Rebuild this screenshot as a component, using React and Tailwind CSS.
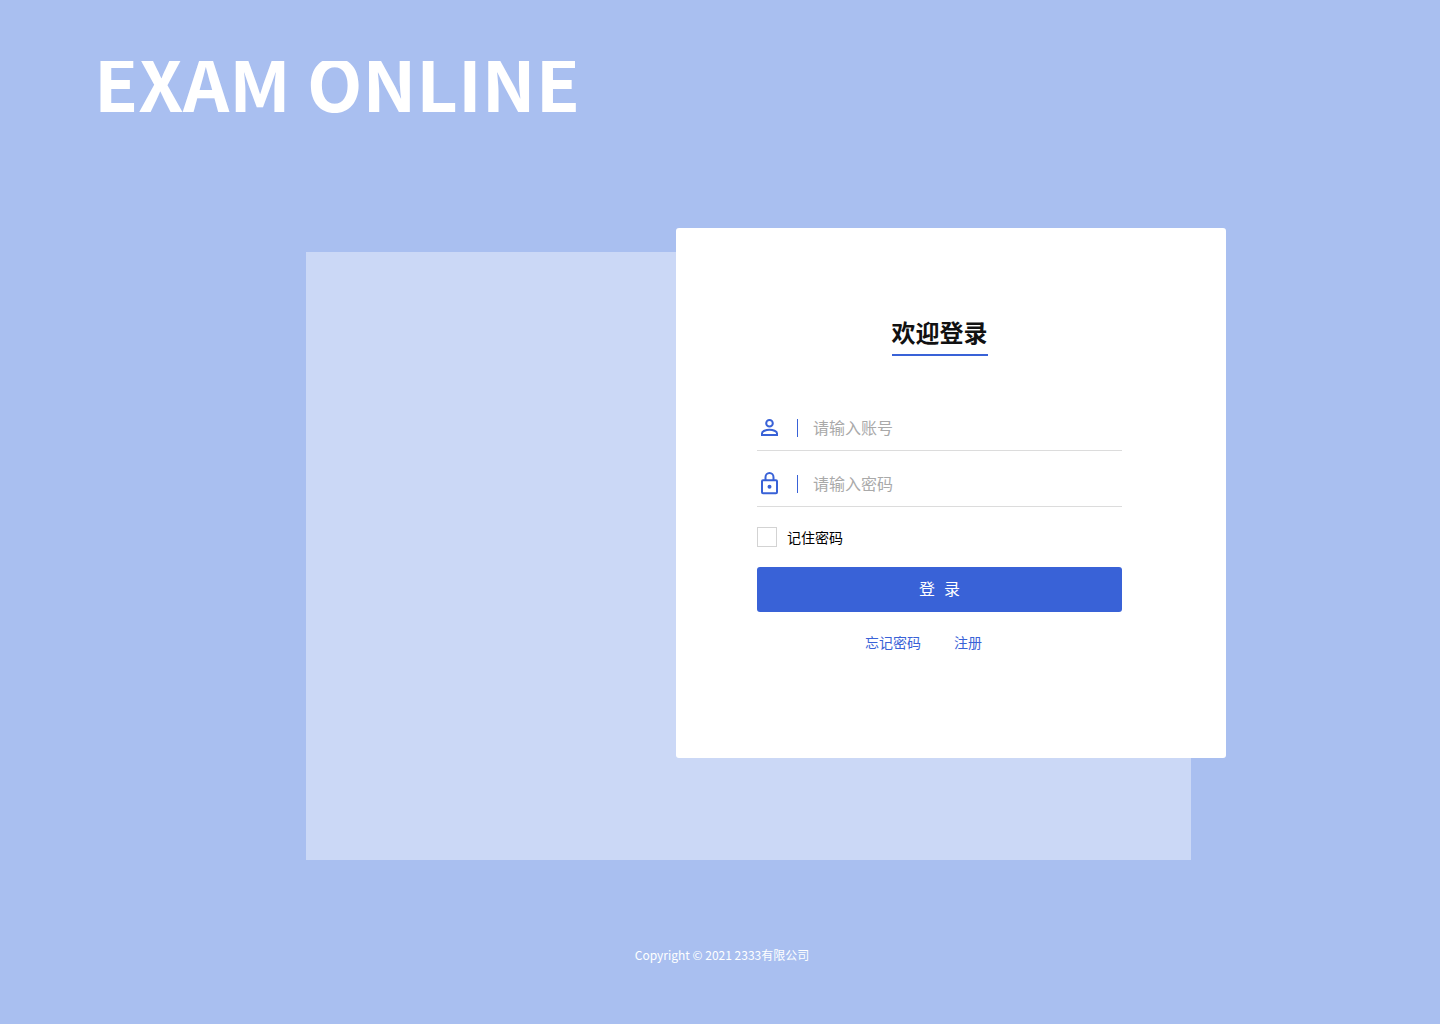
export default function App() {
  return (
    <div className="flex min-h-screen flex-col bg-[#a9bff0] font-['Noto_Sans_CJK_SC',sans-serif]">
      <header className="h-[252px] px-[94px] pt-[61px]">
        <h1 className="h-14 overflow-hidden text-[72px] leading-[40px] font-bold text-white">EXAM ONLINE</h1>
      </header>
      <main className="relative mr-[249px] ml-[306px] h-[608px] bg-[#cbd8f6]">
        <section className="absolute -top-6 -right-[35px] w-[550px] rounded-[3px] bg-white pt-[90px] pr-[104px] pb-[106px] pl-[81px]">
          <form className="flex flex-col" onSubmit={(e) => e.preventDefault()}>
            <h2 className="mb-[49px] self-center border-b-2 border-[#3962d7] pb-2 text-2xl leading-7 font-bold text-[#111]">欢迎登录</h2>
            <div className="flex h-[46px] items-center border-b border-[#dcdcdc]">
              <svg viewBox="0 0 24 24" className="size-6 fill-none stroke-[#3962d7] stroke-2" aria-hidden="true">
                <circle cx="12.500" cy="7.300" r="3.300" />
                <path d="M5 19v-1.700c0-2.200 4-3.500 7.500-3.500s7.500 1.300 7.500 3.500V19Z" />
              </svg>
              <span className="ml-4 h-[18px] w-px bg-[#3962d7]" />
              <input aria-label="账号" placeholder="请输入账号" className="mb-0.5 ml-[15px] min-w-0 flex-1 text-base outline-none placeholder:text-[#a9a9a9]" />
            </div>
            <div className="mt-2.5 flex h-[46px] items-center border-b border-[#dcdcdc]">
              <svg viewBox="0 0 24 24" className="size-6 fill-none stroke-[#3962d7] stroke-2" aria-hidden="true">
                <rect x="5" y="8.200" width="15" height="13" rx="1" />
                <path d="M8.500 8.200V5.200a4 4.200 0 0 1 8 0v3" />
                <circle cx="12.500" cy="14.700" r="2" className="fill-[#3962d7] stroke-none" />
              </svg>
              <span className="ml-4 h-[18px] w-px bg-[#3962d7]" />
              <input type="password" aria-label="密码" placeholder="请输入密码" className="mb-0.5 ml-[15px] min-w-0 flex-1 text-base outline-none placeholder:text-[#a9a9a9]" />
            </div>
            <label className="mt-5 flex h-5 items-center gap-2.5 self-start text-sm">
              <input type="checkbox" className="size-5 appearance-none border border-[#d3d3d3] checked:bg-[#3962d7]" />
              记住密码
            </label>
            <button type="submit" className="mt-5 flex h-[45px] justify-center gap-[9px] rounded-[3px] bg-[#3962d7] pt-[9px] text-base text-white">
              <span>登</span>
              <span>录</span>
            </button>
            <nav className="mt-5 mr-8 flex justify-center gap-[33px] text-sm leading-5 text-[#3962d7]">
              <a href="#forgot">忘记密码</a>
              <a href="#register">注册</a>
            </nav>
          </form>
        </section>
      </main>
      <footer className="pt-[86px] pl-1 text-center text-xs leading-[18px] text-white">Copyright © 2021 2333有限公司</footer>
    </div>
  );
}
